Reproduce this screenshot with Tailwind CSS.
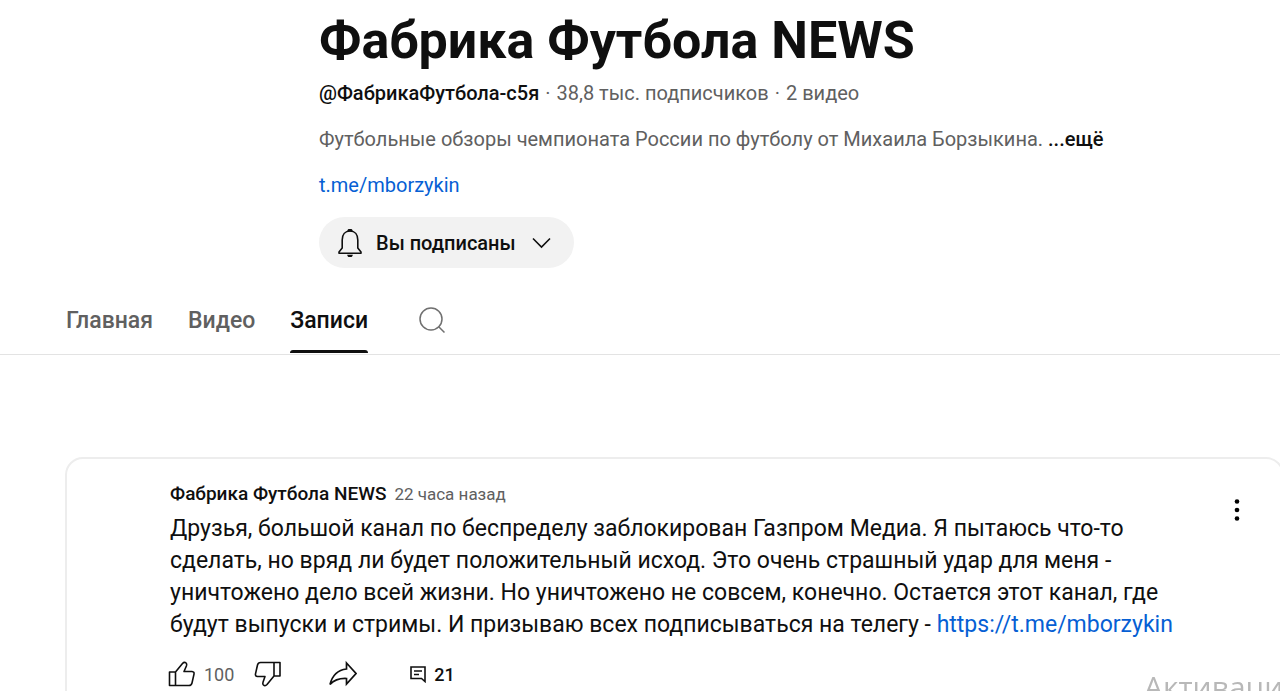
<!DOCTYPE html>
<html lang="ru">
<head>
<meta charset="utf-8">
<meta name="viewport" content="width=device-width, initial-scale=1">
<title>Фабрика Футбола NEWS</title>
<script src="https://cdn.jsdelivr.net/npm/@tailwindcss/browser@4"></script>
</head>
<body class="h-screen overflow-hidden bg-white font-['Roboto',sans-serif] text-[#0f0f0f]">
<header class="flex flex-col items-start pt-[9px] pl-[319px] text-[20px] leading-[28px] text-[#606060]">
  <h1 class="text-[52px] leading-[64px] font-bold text-[#0f0f0f]">Фабрика Футбола NEWS</h1>
  <p class="mt-[6px] whitespace-nowrap"><span class="font-medium text-[#0f0f0f]">@ФабрикаФутбола-с5я</span><span class="mx-[6px]">·</span>38,8 тыс. подписчиков<span class="mx-[6px]">·</span>2 видео</p>
  <p class="mt-[18px] whitespace-nowrap">Футбольные обзоры чемпионата России по футболу от Михаила Борзыкина. <button type="button" class="font-medium text-[#0f0f0f]">...ещё</button></p>
  <a href="https://t.me/mborzykin" class="mt-[18px] text-[#065fd4]">t.me/mborzykin</a>
  <button type="button" class="mt-[18px] flex h-[51px] items-center rounded-full bg-[#f2f2f2] pr-[21px] pl-[17px] font-medium text-[#0f0f0f]">
    <svg class="mr-3 h-7 w-7" viewBox="0 0 28 28" fill="none" stroke="currentColor" stroke-width="1.6" aria-hidden="true">
      <path d="M6.2 19V11C6.2 5.700 9 2 14 2s7.800 3.700 7.800 9v8l3.200 4v1.300H3V23z" stroke-linejoin="round"/>
      <path d="M11.200 2.500a2.800 2.800 0 0 1 5.600 0zM11.200 25.800h5.600a2.800 2.500 0 0 1-5.600 0z" fill="currentColor" stroke="none"/>
    </svg>
    Вы подписаны
    <svg class="ml-[13px] h-6 w-6" viewBox="0 0 24 24" fill="none" stroke="currentColor" stroke-width="1.600" aria-hidden="true"><path d="m4 7.500 8.500 8.500L21 7.500"/></svg>
  </button>
</header>

<nav class="mt-[31px] flex h-[56px] items-stretch gap-[35px] border-b border-[#e3e3e3] pl-[66px] text-[23px] leading-[44px] font-medium text-[#606060]" aria-label="Разделы канала">
  <a href="#home">Главная</a>
  <a href="#videos">Видео</a>
  <a href="#posts" class="flex flex-col justify-between pb-px text-[#0f0f0f]" aria-current="page">Записи<span class="h-[3px] rounded-t-sm bg-[#0f0f0f]"></span></a>
  <button type="button" class="ml-[15px] flex h-[42px] items-center" aria-label="Поиск">
    <svg class="h-7 w-7" viewBox="0 0 28 28" fill="none" stroke="#707070" stroke-width="1.500" aria-hidden="true"><circle cx="13" cy="13" r="11"/><path d="m20.500 20.500 6 6"/></svg>
  </button>
</nav>

<main class="-mr-1 mt-[102px] pl-[65px]">
  <article class="flex rounded-[18px] border-2 border-[#ededed] pt-[22px] pr-[33px] pb-5 pl-[103px]">
    <div class="min-w-0 flex-1">
      <div class="flex items-center gap-2 leading-[26px]">
        <h2 class="text-[19px] font-medium">Фабрика Футбола NEWS</h2>
        <span class="text-[17px] text-[#606060]">22 часа назад</span>
      </div>
      <p class="mt-[6px] text-[23px] leading-[32px] whitespace-nowrap">Друзья, большой канал по беспределу заблокирован Газпром Медиа. Я пытаюсь что-то<br>сделать, но вряд ли будет положительный исход. Это очень страшный удар для меня -<br>уничтожено дело всей жизни. Но уничтожено не совсем, конечно. Остается этот канал, где<br>будут выпуски и стримы. И призываю всех подписываться на телегу - <a href="https://t.me/mborzykin" class="text-[#065fd4]">https://t.me/mborzykin</a></p>
      <div class="mt-[19px] flex h-7 items-center text-[18px]">
        <button type="button" class="-ml-0.5" aria-label="Нравится">
          <svg class="h-7 w-7" viewBox="0 0 28 28" fill="none" stroke="currentColor" stroke-width="1.600" stroke-linejoin="round" aria-hidden="true"><path d="M1.500 12H7.500V25.500H1.500zM7.500 12 14.500 3.500q1.800-2 3.600-.5 1 1 .4 2.700L16 11.500H24q2.500.3 2 2.700L24 23q-.6 2.500-3 2.500H7.500"/></svg>
        </button>
        <span class="ml-2 text-[#606060]">100</span>
        <button type="button" class="ml-5" aria-label="Не нравится">
          <svg class="h-7 w-7" viewBox="0 0 28 28" fill="none" stroke="currentColor" stroke-width="1.600" stroke-linejoin="round" aria-hidden="true"><path d="M26 16H20V2.500H26zM20 16 13 24.500q-1.800 2-3.600.5-1-1-.4-2.700L11 16.500H3.500q-2.500-.3-2-2.700L3.500 5q.6-2.500 3-2.500H20"/></svg>
        </button>
        <button type="button" class="ml-[47px]" aria-label="Поделиться">
          <svg class="h-7 w-7" viewBox="0 0 28 28" fill="none" stroke="currentColor" stroke-width="1.700" aria-hidden="true"><path d="M17.500 3 27 13.500l-9.500 10.500V18.500Q7 18 1 24.500 4.500 10.500 17.500 9z"/></svg>
        </button>
        <button type="button" class="ml-[53px] flex items-center gap-2 font-medium" aria-label="Комментарии: 21">
          <svg class="h-[18px] w-4" viewBox="0 0 16 18" fill="none" stroke="currentColor" stroke-width="1.600" aria-hidden="true"><path d="M1 2h14v14.500L11.500 13.500H1zM4 6h8M4 9.500h5"/></svg>
          21
        </button>
      </div>
    </div>
    <button type="button" class="mt-[13px] flex h-8 w-6 items-center justify-center self-start" aria-label="Действия">
      <svg class="h-6 w-6" viewBox="0 0 24 24" aria-hidden="true"><circle cx="12" cy="3.500" r="2.300"/><circle cx="12" cy="12" r="2.300"/><circle cx="12" cy="20.500" r="2.300"/></svg>
    </button>
  </article>
</main>
<div class="pointer-events-none fixed right-0 -bottom-3 w-[136px] overflow-hidden font-['Open_Sans',sans-serif] text-[30px] leading-[32px] whitespace-nowrap text-[#b8b8b8]">Активаци</div>
</body>
</html>
